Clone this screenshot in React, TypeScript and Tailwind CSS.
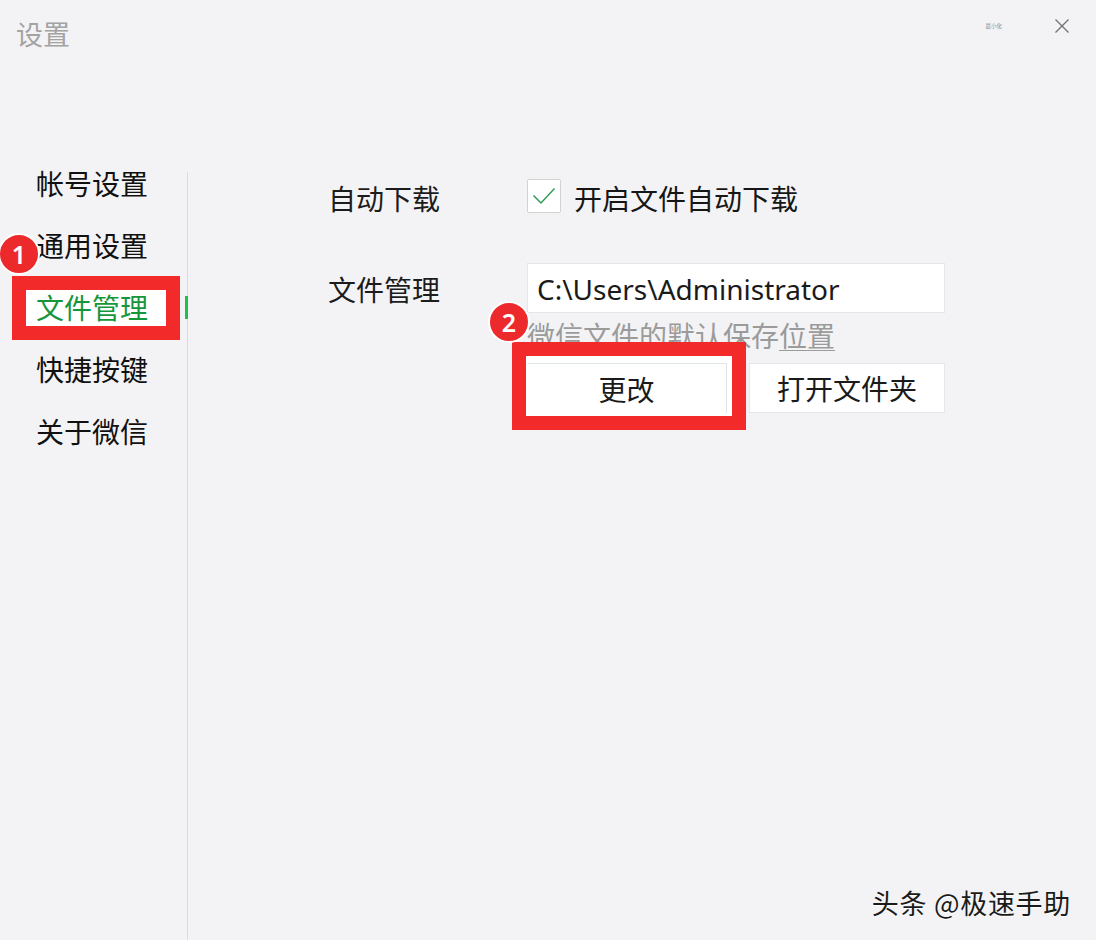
const cjk = "font-['Noto_Sans_CJK_SC','Noto_Sans',sans-serif]"

const navItems = ["帐号设置", "通用设置", "文件管理", "快捷按键", "关于微信"]

const Badge = ({ num, className }: { num: number, className: string }) => {
  return (
    <div className={`absolute z-30 flex items-center justify-center w-[42px] h-[42px] rounded-full bg-[#ec2a2c] border-[2px] border-white text-white text-[25px] font-semibold leading-none font-['Noto_Sans',sans-serif] ${className}`}>
      {num}
    </div>
  )
}

const NavItem = ({ label, active }: { label: string, active: boolean }) => {
  if (active) {
    return (
      <div className="relative h-[24px] leading-[22px] text-[28px] text-[#16963a]">
        <div className="absolute left-[-24px] top-[-20px] w-[168px] h-[64px] bg-white border-[14px] border-[#f32a2a]" />
        <span className="relative z-10 whitespace-nowrap">{label}</span>
        <div className="absolute left-[149px] top-[0px] w-[3px] h-[23px] bg-[#22c04a]" />
      </div>
    )
  }
  return <div className="h-[24px] leading-[22px] text-[28px] text-[#111111] whitespace-nowrap">{label}</div>
}

const App = () => {
  return (
    <div className={`relative flex flex-col w-[1096px] h-[940px] overflow-hidden bg-[#f3f3f5] ${cjk}`}>
      <header className="flex justify-between h-[172px] pl-[16px] pr-[26px] pt-[15px]">
        <span className="text-[27px] leading-[38px] text-[#a3a3a3]">设置</span>
        <div className="flex items-start gap-[52px] pt-[3px]">
          <span className="mt-[4px] text-[5.5px] leading-[8px] text-[#8d8d8d] whitespace-nowrap">最小化</span>
          <svg className="w-[16px] h-[16px]" viewBox="0 0 16 16" fill="none" stroke="#707070" strokeWidth="1.3">
            <path d="M1.5 1.5 14.5 14.5M14.5 1.5 1.5 14.5" />
          </svg>
        </div>
      </header>

      <div className="flex flex-1">
        <nav className="flex flex-col gap-[38px] w-[188px] pl-[36px] border-r border-[#dcdcde]">
          {navItems.map((item, index) => <NavItem key={index} label={item} active={index === 2} />)}
        </nav>

        <main className="flex flex-col pl-[140px]">
          <section className="flex items-start h-[91px] pt-[6px]">
            <div className="w-[199px] text-[28px] leading-[40px] text-[#1c1c1c] whitespace-nowrap">自动下载</div>
            <div className="flex items-center">
              <div className="flex items-center justify-center w-[34px] h-[34px] mb-[4px] bg-white border border-[#d2d2d2] rounded-[2px]">
                <svg className="w-[24px] h-[20px]" viewBox="0 0 24 20" fill="none" stroke="#2f9c55" strokeWidth="1.5">
                  <path d="M1.5 9.5 9 17 22.5 2.5" />
                </svg>
              </div>
              <span className="ml-[13px] text-[28px] leading-[40px] text-[#161616] whitespace-nowrap">开启文件自动下载</span>
            </div>
          </section>

          <section className="flex items-start">
            <div className="w-[199px] pt-[6px] text-[28px] leading-[40px] text-[#1c1c1c] whitespace-nowrap">文件管理</div>
            <div className="flex flex-col w-[418px]">
              <div className="flex items-center h-[50px] pl-[9px] pt-[1px] bg-white border border-[#e6e6e8] text-[28px] text-[#1a1a1a] font-['Noto_Sans',sans-serif] whitespace-nowrap">
                C:\Users\Administrator
              </div>
              <div className="mt-[3px] h-[47px] text-[28px] leading-[38px] text-[#9b9b9b] whitespace-nowrap">
                微信文件的默认保存<span className="underline decoration-[1px] underline-offset-[3px]">位置</span>
              </div>
              <div className="flex justify-between">
                <div className="relative w-[200px] h-[50px]">
                  <div className="absolute left-[-15px] top-[-21px] w-[234px] h-[88px] bg-white border-[14px] border-[#f32a2a]" />
                  <button className="relative w-full h-full bg-white border-t border-r border-[#dfe6e8] text-[28px] text-[#1a1a1a]">更改</button>
                </div>
                <button className="w-[196px] h-[50px] bg-white border border-[#e6e6e8] text-[28px] text-[#1a1a1a] whitespace-nowrap">打开文件夹</button>
              </div>
            </div>
          </section>
        </main>
      </div>

      <Badge num={1} className="left-[-2px] top-[233px]" />
      <Badge num={2} className="left-[488px] top-[301px]" />

      <div className="absolute right-[25px] bottom-[21px] text-[27px] leading-[32px] tracking-[0.7px] text-[#1b1b1b] whitespace-nowrap [text-shadow:0_1px_1px_#ffffff]">
        头条 @极速手助
      </div>
    </div>
  )
}

export default App
